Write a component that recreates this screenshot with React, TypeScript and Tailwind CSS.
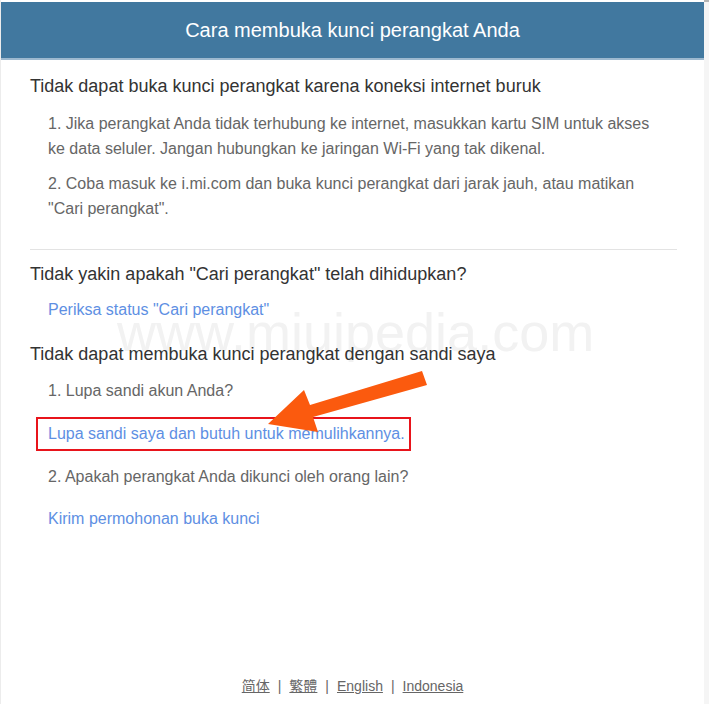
import React from "react";

export default function App() {
  const font = { fontFamily: '"Liberation Sans", Arial, "Noto Sans CJK SC", sans-serif' };
  return (
    <div className="relative flex w-[709px] min-h-[704px] bg-white" style={font}>
      <div className="absolute left-0 top-0 h-[2px] w-[709px] bg-[#b5b5b5]" />
      <div className="relative flex w-[704px] flex-col border-l border-[#ececec] bg-white pt-[2px]">
        <div className="flex h-[58px] items-center justify-center border-b-2 border-[#9db9cf] bg-[#41789f]">
          <h1 className="text-[20px] text-white">Cara membuka kunci perangkat Anda</h1>
        </div>

        <div className="relative flex-1 px-[29px]">
          <div className="pointer-events-none absolute left-[116px] top-[242px] select-none text-[54px] leading-[60px] text-[#f2f2f2]">
            www.miuipedia.com
          </div>

          <div className="relative">
            <h2 className="mt-[15px] text-[18px] leading-[22px] text-[#333]">
              Tidak dapat buka kunci perangkat karena koneksi internet buruk
            </h2>
            <div className="mt-[14px] w-[620px] pl-[18px] text-[16px] leading-[25px] text-[#666]">
              <p>1. Jika perangkat Anda tidak terhubung ke internet, masukkan kartu SIM untuk akses ke data seluler. Jangan hubungkan ke jaringan Wi-Fi yang tak dikenal.</p>
              <p className="mt-[10px]">2. Coba masuk ke i.mi.com dan buka kunci perangkat dari jarak jauh, atau matikan "Cari perangkat".</p>
            </div>
            <div className="mt-[28px] h-px w-[647px] bg-[#e3e3e3]" />

            <h2 className="mt-[13px] text-[18px] leading-[22px] text-[#333]">
              Tidak yakin apakah "Cari perangkat" telah dihidupkan?
            </h2>
            <p className="mt-[14px] pl-[18px] text-[16px] leading-[22px] text-[#5e8fe3]">Periksa status "Cari perangkat"</p>

            <h2 className="mt-[22px] text-[18px] leading-[22px] text-[#333]">
              Tidak dapat membuka kunci perangkat dengan sandi saya
            </h2>
            <p className="mt-[15px] pl-[18px] text-[16px] leading-[22px] text-[#666]">1. Lupa sandi akun Anda?</p>
            <div className="ml-[6px] mt-[15px] w-[375px] border-2 border-[#e8141b] py-[4px] pl-[10px] text-[16px] leading-[22px] text-[#5e8fe3]">
              Lupa sandi saya dan butuh untuk memulihkannya.
            </div>
            <p className="mt-[15px] pl-[18px] text-[16px] leading-[22px] text-[#666]">2. Apakah perangkat Anda dikunci oleh orang lain?</p>
            <p className="mt-[20px] pl-[18px] text-[16px] leading-[22px] text-[#5e8fe3]">Kirim permohonan buka kunci</p>
          </div>
        </div>

        <div className="flex h-[29px] items-start justify-center text-[14px] leading-[22px] text-[#666]">
          <span className="underline">简体</span>
          <span className="mx-[8px]">|</span>
          <span className="underline">繁體</span>
          <span className="mx-[8px]">|</span>
          <span className="underline">English</span>
          <span className="mx-[8px]">|</span>
          <span className="underline">Indonesia</span>
        </div>
      </div>
      <div className="mt-[2px] w-[5px] bg-[#f5f5f5]" />

      <svg className="pointer-events-none absolute left-0 top-0" width="709" height="704">
        <polygon
          points="422,371 310,405 304,390 268,424 318,432 313,417 427,385"
          fill="#fb5a0e"
        />
      </svg>
    </div>
  );
}
